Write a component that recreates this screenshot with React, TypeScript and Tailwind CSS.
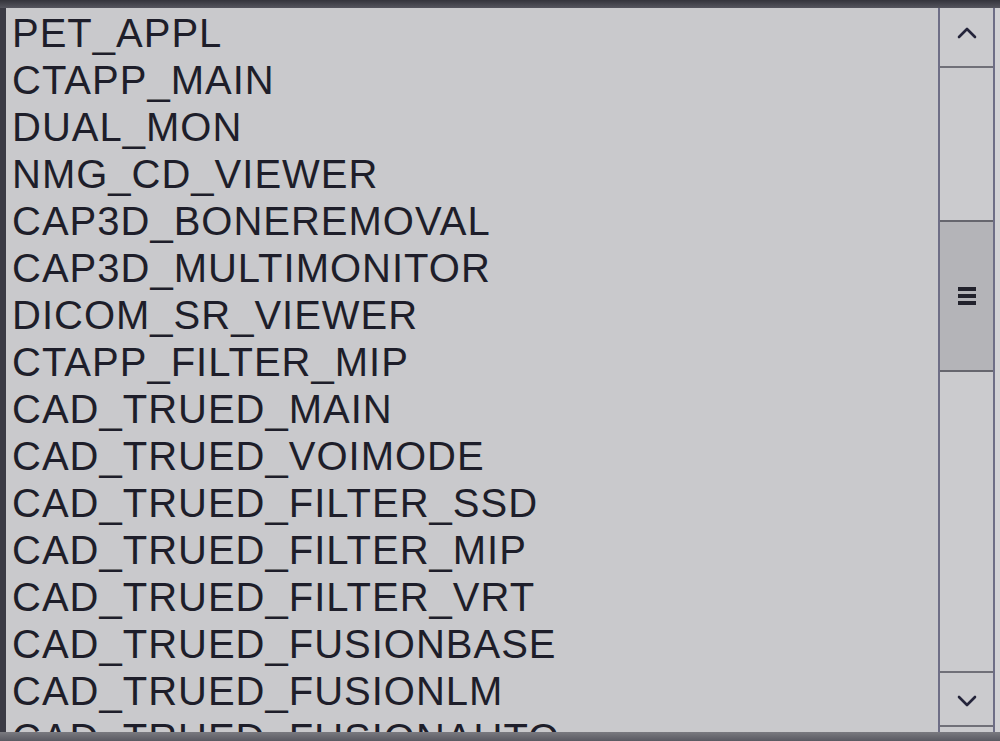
const ITEMS = [
  'PET_APPL',
  'CTAPP_MAIN',
  'DUAL_MON',
  'NMG_CD_VIEWER',
  'CAP3D_BONEREMOVAL',
  'CAP3D_MULTIMONITOR',
  'DICOM_SR_VIEWER',
  'CTAPP_FILTER_MIP',
  'CAD_TRUED_MAIN',
  'CAD_TRUED_VOIMODE',
  'CAD_TRUED_FILTER_SSD',
  'CAD_TRUED_FILTER_MIP',
  'CAD_TRUED_FILTER_VRT',
  'CAD_TRUED_FUSIONBASE',
  'CAD_TRUED_FUSIONLM',
  'CAD_TRUED_FUSIONAUTO',
];

function Chevron({ down }: { down?: boolean }) {
  return (
    <svg width="22" height="14" viewBox="0 0 22 14" fill="none">
      <path
        d={down ? 'M3 3 L11 11 L19 3' : 'M3 11 L11 3 L19 11'}
        stroke="#24243a"
        strokeWidth="2.6"
        strokeLinecap="round"
        strokeLinejoin="round"
      />
    </svg>
  );
}

export default function App() {
  return (
    <div className="w-[1000px] h-[741px] bg-[#c9c9cc] flex flex-col overflow-hidden">
      {/* top frame */}
      <div className="h-[8px] bg-gradient-to-b from-[#34343c] to-[#55555e] shrink-0" />
      <div className="flex flex-1 min-h-0">
        <div className="w-[6px] bg-[#3a3a44] shrink-0" />
        <div className="flex-1 min-w-0 overflow-hidden pt-[2px] pl-[6px]">
          {ITEMS.map((item) => (
            <div
              key={item}
              className="h-[47px] leading-[47px] text-[40px] tracking-[1px] text-[#1e1e2a] whitespace-nowrap"
              style={{ fontFamily: '"Liberation Sans", Arial, sans-serif' }}
            >
              {item}
            </div>
          ))}
        </div>
        {/* scrollbar */}
        <div className="w-[57px] shrink-0 border-l-[2px] border-r-[2px] border-[#6e6e86] bg-[#cbcbce] flex flex-col pb-[5px]">
          <div className="h-[60px] border-b-[2px] border-[#707078] flex items-center justify-center pb-[8px]">
            <Chevron />
          </div>
          <div className="flex-1 flex flex-col">
            <div className="h-[152px]" />
            <div className="h-[152px] bg-[#b4b4b8] border-y-[2px] border-[#66666e] flex flex-col items-center justify-center gap-[3px]">
              <div className="w-[18px] h-[4px] bg-[#22222c]" />
              <div className="w-[18px] h-[4px] bg-[#22222c]" />
              <div className="w-[18px] h-[4px] bg-[#22222c]" />
            </div>
            <div className="flex-1" />
          </div>
          <div className="h-[56px] border-t-[2px] border-b-[2px] border-[#707078] flex items-center justify-center pt-[4px]">
            <Chevron down />
          </div>
        </div>
        <div className="w-[5px] shrink-0 bg-[#d2d2d5]" />
      </div>
      {/* bottom frame */}
      <div className="h-[9px] bg-gradient-to-b from-[#7a7a80] to-[#5a5a62] shrink-0" />
    </div>
  );
}
